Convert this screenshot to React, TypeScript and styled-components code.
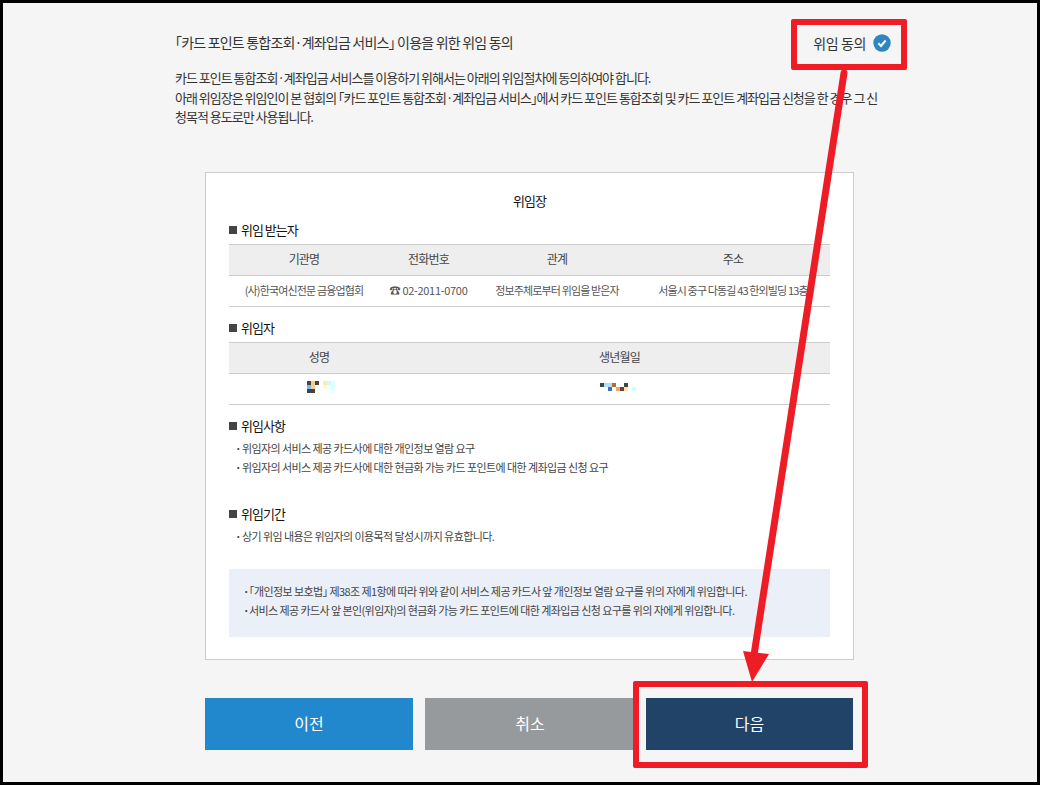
import styled, { createGlobalStyle } from 'styled-components';

const FONT = `"Noto Sans CJK KR", "Noto Sans", sans-serif`;

const GlobalStyle = createGlobalStyle`
  html, body {
    margin: 0;
    padding: 0;
    background: #000;
  }
  * {
    box-sizing: border-box;
  }
`;

const App = () => {
  return (
    <Frame>
      <GlobalStyle />
      <TopRow>
        <PageTitle>
          <Bracket>「</Bracket>카드 포인트 통합조회·계좌입금 서비스<Bracket>」</Bracket> 이용을 위한 위임 동의
        </PageTitle>
        <AgreeLabel>
          위임 동의
          <CheckIcon />
        </AgreeLabel>
      </TopRow>
      <Intro>
        카드 포인트 통합조회·계좌입금 서비스를 이용하기 위해서는 아래의 위임절차에 동의하여야 합니다.
        <br />
        아래 위임장은 위임인이 본 협회의 <Bracket>「</Bracket>카드 포인트 통합조회·계좌입금 서비스<Bracket>」</Bracket>에서 카드 포인트 통합조회 및 카드 포인트 계좌입금 신청을 한 경우 그 신
        <br />
        청목적 용도로만 사용됩니다.
      </Intro>

      <Card>
        <CardTitle>위임장</CardTitle>

        <SectionTitle $gap={9}>위임 받는자</SectionTitle>
        <Table $columns="150px 99px 158px 1fr">
          <HeadCell>기관명</HeadCell>
          <HeadCell>전화번호</HeadCell>
          <HeadCell>관계</HeadCell>
          <HeadCell>주소</HeadCell>
          <BodyCell>(사)한국여신전문 금융업협회</BodyCell>
          <BodyCell>
            <Phone>☎ 02-2011-0700</Phone>
          </BodyCell>
          <BodyCell>정보주체로부터 위임을 받은자</BodyCell>
          <BodyCell>서울시 중구 다동길 43 한외빌딩 13층</BodyCell>
        </Table>

        <SectionTitle $gap={11}>위임자</SectionTitle>
        <Table $columns="180px 1fr">
          <HeadCell>성명</HeadCell>
          <HeadCell>생년월일</HeadCell>
          <BodyCell>
            <Mosaic $columns={7} $nudge={3}>
              {NAME_PIXELS.map((color, i) => (
                <Pixel key={i} $color={color} />
              ))}
            </Mosaic>
          </BodyCell>
          <BodyCell>
            <Mosaic $columns={9} $nudge={-3}>
              {BIRTH_PIXELS.map((color, i) => (
                <Pixel key={i} $color={color} />
              ))}
            </Mosaic>
          </BodyCell>
        </Table>

        <SectionTitle $gap={11}>위임사항</SectionTitle>
        <BulletList>
          <li>위임자의 서비스 제공 카드사에 대한 개인정보 열람 요구</li>
          <li>위임자의 서비스 제공 카드사에 대한 현금화 가능 카드 포인트에 대한 계좌입금 신청 요구</li>
        </BulletList>

        <SectionTitle $gap={27}>위임기간</SectionTitle>
        <BulletList>
          <li>상기 위임 내용은 위임자의 이용목적 달성시까지 유효합니다.</li>
        </BulletList>

        <Notice>
          <li>
            <Bracket>「</Bracket>개인정보 보호법<Bracket>」</Bracket> 제38조 제1항에 따라 위와 같이 서비스 제공 카드사 앞 개인정보 열람 요구를 위의 자에게 위임합니다.
          </li>
          <li>서비스 제공 카드사 앞 본인(위임자)의 현금화 가능 카드 포인트에 대한 계좌입금 신청 요구를 위의 자에게 위임합니다.</li>
        </Notice>
      </Card>

      <Buttons>
        <Button $bg="#2188cd" $width={208}>이전</Button>
        <MiddleButton $bg="#979a9d" $width={212}>취소</MiddleButton>
        <Button $bg="#224368" $width={207}>다음</Button>
      </Buttons>

      <Highlight $left={788} $top={16} $width={116} $height={51} />
      <Highlight $left={630} $top={678} $width={235} $height={87} />
      <Arrow viewBox="0 0 1040 785" aria-hidden="true">
        <line x1="844" y1="73" x2="754" y2="655" stroke="#ee1c25" strokeWidth="7" strokeLinecap="round" />
        <polygon points="743,651 769,654 752,682" fill="#ee1c25" />
      </Arrow>
    </Frame>
  );
};

const CheckIcon = () => (
  <CheckSvg viewBox="0 0 18 18" aria-hidden="true">
    <circle cx="9" cy="9" r="8.7" fill="#2e86c1" />
    <path d="M5.4 9.2l2.6 2.7 4.6-5.4" fill="none" stroke="#fff" strokeWidth="2" />
  </CheckSvg>
);

const D = '#444444';
const W = 'transparent';

const NAME_PIXELS = [
  D, '#ffcc88', D, W, '#ffe8b8', '#ccfbff', '#ddffff',
  '#7ab8f0', '#ffcc88', '#e8ffff', W, '#fff8dd', '#eeffff', '#ddffff',
  D, D, W, W, W, W, '#e8ffff',
];

const BIRTH_PIXELS = [
  D, '#aee0f8', '#aee0f8', '#b06c3c', W, W, D, W, W,
  W, W, '#3f6fb5', W, '#e8aa66', '#6e4038', '#ffe4b0', W, '#ccffff',
];

export default App;

const Frame = styled.div`
  position: relative;
  width: 1040px;
  height: 785px;
  overflow: hidden;
  border: 3px solid #000;
  padding: 0 0 0 172px;
  background: #f5f5f5;
  color: #333;
  font-family: ${FONT};
`;

// corner brackets are full width in this font, half width in the original
const Bracket = styled.span`
  font-feature-settings: 'halt';
`;

const TopRow = styled.div`
  display: flex;
  justify-content: space-between;
  align-items: center;
  width: 714px;
  padding-top: 27px;
`;

const PageTitle = styled.h1`
  margin: 0;
  font-size: 14px;
  font-weight: 400;
  line-height: 22px;
  letter-spacing: -0.8px;
`;

const AgreeLabel = styled.div`
  display: flex;
  align-items: center;
  gap: 7px;
  margin-top: 2px;
  margin-right: -2px;
  font-size: 14px;
  line-height: 22px;
  letter-spacing: -0.4px;
`;

const CheckSvg = styled.svg`
  width: 18px;
  height: 18px;
`;

const Intro = styled.p`
  width: 714px;
  margin: 14px 0 0;
  font-size: 13px;
  line-height: 19.5px;
  letter-spacing: -1px;
`;

const Card = styled.section`
  width: 649px;
  height: 488px;
  margin: 45px 0 0 30px;
  padding: 18px 23px 0;
  border: 1px solid #cccccc;
  background: #fff;
`;

const CardTitle = styled.h2`
  margin: 0;
  font-size: 13px;
  font-weight: 400;
  line-height: 20px;
  letter-spacing: -1px;
  text-align: center;
  color: #111;
`;

const SectionTitle = styled.h3<{ $gap: number }>`
  display: flex;
  align-items: center;
  gap: 4px;
  margin: ${(p) => p.$gap}px 0 4px;
  font-size: 13px;
  font-weight: 400;
  line-height: 20px;
  letter-spacing: -1px;
  color: #111;

  &::before {
    content: '';
    width: 8px;
    height: 8px;
    background: #444;
  }
`;

const Table = styled.div<{ $columns: string }>`
  display: grid;
  grid-template-columns: ${(p) => p.$columns};
  border-top: 1px solid #cccccc;
  border-bottom: 1px solid #cccccc;
`;

const HeadCell = styled.div`
  height: 31px;
  border-bottom: 1px solid #cccccc;
  background: #eeeeee;
  font-size: 12px;
  line-height: 27px;
  letter-spacing: -0.8px;
  text-align: center;
  color: #444;
`;

const BodyCell = styled.div`
  display: flex;
  align-items: center;
  justify-content: center;
  height: 30px;
  padding-bottom: 2px;
  font-size: 11px;
  letter-spacing: -0.85px;
  white-space: nowrap;
  color: #555;
`;

const Phone = styled.span`
  letter-spacing: -0.3px;
`;

const Mosaic = styled.div<{ $columns: number; $nudge: number }>`
  display: grid;
  grid-template-columns: repeat(${(p) => p.$columns}, 4px);
  grid-auto-rows: 4px;
  margin-left: ${(p) => p.$nudge}px;
  margin-top: -2px;
`;

const Pixel = styled.span<{ $color: string }>`
  background: ${(p) => p.$color};
`;

const BulletList = styled.ul`
  margin: -1px 0 0;
  padding: 0;
  list-style: none;
  font-size: 11px;
  line-height: 19px;
  letter-spacing: -0.58px;
  color: #444;

  li {
    padding-left: 13px;
    position: relative;
  }

  li::before {
    content: '·';
    position: absolute;
    left: 6px;
    font-weight: 700;
  }
`;

const Notice = styled(BulletList)`
  margin-top: 23px;
  padding: 13px 14px 15px;
  height: 68px;
  background: #eaeff8;

  li {
    padding-left: 6px;
  }

  li::before {
    left: 0;
  }
`;

const Buttons = styled.div`
  display: flex;
  margin: 38px 0 0 30px;
`;

const Button = styled.button<{ $bg: string; $width: number }>`
  width: ${(p) => p.$width}px;
  height: 52px;
  padding: 0 0 2px;
  border: 0;
  background: ${(p) => p.$bg};
  color: #fff;
  font-family: ${FONT};
  font-size: 16px;
`;

const MiddleButton = styled(Button)`
  margin: 0 9px 0 12px;
  padding-right: 2px;
`;

const Highlight = styled.div<{ $left: number; $top: number; $width: number; $height: number }>`
  position: absolute;
  left: ${(p) => p.$left}px;
  top: ${(p) => p.$top}px;
  width: ${(p) => p.$width}px;
  height: ${(p) => p.$height}px;
  border: 6px solid #ee1c25;
  border-radius: 2px;
`;

const Arrow = styled.svg`
  position: absolute;
  left: -3px;
  top: -3px;
  width: 1040px;
  height: 785px;
  pointer-events: none;
`;
